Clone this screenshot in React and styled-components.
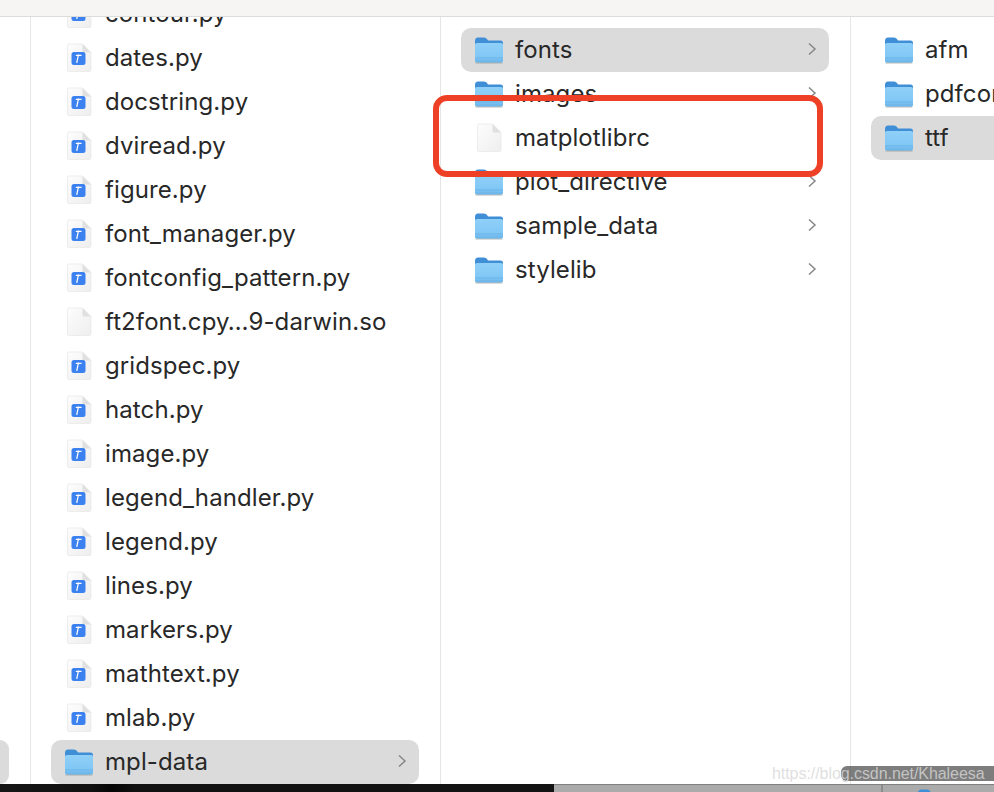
import React from 'react';
import styled, { createGlobalStyle } from 'styled-components';

const GlobalStyle = createGlobalStyle`
  html, body {
    margin: 0;
    padding: 0;
    height: 100%;
    overflow: hidden;
    background: #fff;
  }
  * { box-sizing: border-box; }
`;

const moduleFiles = [
  { name: 'contour.py', type: 'py' },
  { name: 'dates.py', type: 'py' },
  { name: 'docstring.py', type: 'py' },
  { name: 'dviread.py', type: 'py' },
  { name: 'figure.py', type: 'py' },
  { name: 'font_manager.py', type: 'py' },
  { name: 'fontconfig_pattern.py', type: 'py' },
  { name: 'ft2font.cpy…9-darwin.so', type: 'file' },
  { name: 'gridspec.py', type: 'py' },
  { name: 'hatch.py', type: 'py' },
  { name: 'image.py', type: 'py' },
  { name: 'legend_handler.py', type: 'py' },
  { name: 'legend.py', type: 'py' },
  { name: 'lines.py', type: 'py' },
  { name: 'markers.py', type: 'py' },
  { name: 'mathtext.py', type: 'py' },
  { name: 'mlab.py', type: 'py' },
  { name: 'mpl-data', type: 'folder', selected: true },
];

const dataFiles = [
  { name: 'fonts', type: 'folder', selected: true },
  { name: 'images', type: 'folder' },
  { name: 'matplotlibrc', type: 'file' },
  { name: 'plot_directive', type: 'folder' },
  { name: 'sample_data', type: 'folder' },
  { name: 'stylelib', type: 'folder' },
];

const fontFiles = [
  { name: 'afm', type: 'folder' },
  { name: 'pdfcorefonts', type: 'folder' },
  { name: 'ttf', type: 'folder', selected: true },
];

const FolderIcon = ({ idSuffix }) => (
  <svg width="30" height="28" viewBox="0 0 30 28">
    <defs>
      <linearGradient id={`folderBody${idSuffix}`} x1="0" y1="0" x2="0" y2="1">
        <stop offset="0" stopColor="#8fd0f8" />
        <stop offset="1" stopColor="#7cc4f4" />
      </linearGradient>
    </defs>
    <path d="M1 5 Q1 1.5 4 1.5 H10 Q12 1.5 13 3 L14 4.5 H26.5 Q29 4.5 29 7 V12 H1 Z" fill="#3f8ed6" />
    <path d="M1 8.5 Q1 7 3 7 H27 Q29 7 29 8.5 V24.5 Q29 26.5 27 26.5 H3 Q1 26.5 1 24.5 Z" fill={`url(#folderBody${idSuffix})`} />
    <rect x="1" y="21.5" width="28" height="1" fill="#68b2e8" />
    <path d="M1 23.5 H29 V24.6 Q29 26.5 27 26.5 H3 Q1 26.5 1 24.6 Z" fill="#6fb9ed" />
    <path d="M1.5 27 H28.5" stroke="#8d8d8d" strokeWidth="1" opacity="0.6" />
  </svg>
);

const DocIcon = ({ python, idSuffix }) => (
  <svg width="26" height="30" viewBox="0 0 26 30">
    <defs>
      <linearGradient id={`docBody${idSuffix}`} x1="0" y1="0" x2="1" y2="1">
        <stop offset="0" stopColor="#fdfdfd" />
        <stop offset="1" stopColor="#eeeeee" />
      </linearGradient>
    </defs>
    <path d="M1.5 2.5 Q1.5 1 3 1 H16.5 L25 9.5 V27 Q25 28.5 23.5 28.5 H3 Q1.5 28.5 1.5 27 Z" fill={`url(#docBody${idSuffix})`} stroke="#e6e6e6" strokeWidth="0.7" />
    <path d="M16.5 1 V8 Q16.5 9.5 18 9.5 H25 Z" fill="#e0e0e0" />
    {python && <rect x="5.5" y="9" width="14" height="13" rx="2.5" fill="#3b82f0" />}
    {python && <path d="M12.4 12 L10.8 19.5" stroke="#fff" strokeWidth="1.2" strokeLinecap="round" />}
    {python && <path d="M10.4 12.4 H15" stroke="#fff" strokeWidth="1.4" strokeLinecap="round" />}
  </svg>
);

const Chevron = () => (
  <ChevronMark width="10" height="14" viewBox="0 0 10 14">
    <path d="M2 1.5 L8 7 L2 12.5" fill="none" stroke="#878787" strokeWidth="1.5" />
  </ChevronMark>
);

const FileRow = ({ item, chevrons, idSuffix }) => (
  <Row $selected={item.selected}>
    <IconSlot>
      {item.type === 'folder' ? (
        <FolderIcon idSuffix={idSuffix} />
      ) : (
        <DocIcon python={item.type === 'py'} idSuffix={idSuffix} />
      )}
    </IconSlot>
    <RowName>{item.name}</RowName>
    {chevrons && item.type === 'folder' && <Chevron />}
  </Row>
);

const App = () => (
  <Page>
    <GlobalStyle />
    <TopBar />
    <Columns>
      <ParentStub>
        <StubRow />
      </ParentStub>
      <ModuleColumn>
        {moduleFiles.map((item, i) => (
          <FileRow key={item.name} item={item} chevrons idSuffix={`m${i}`} />
        ))}
      </ModuleColumn>
      <ListColumn>
        {dataFiles.map((item, i) => (
          <FileRow key={item.name} item={item} chevrons idSuffix={`d${i}`} />
        ))}
      </ListColumn>
      <ListColumn>
        {fontFiles.map((item, i) => (
          <FileRow key={item.name} item={item} idSuffix={`f${i}`} />
        ))}
      </ListColumn>
    </Columns>
    <BottomStrip>
      <DesktopDark />
      <DesktopWindow>
        <DesktopDivider />
        <DesktopFolder>
          <FolderIcon idSuffix="bottom" />
        </DesktopFolder>
      </DesktopWindow>
    </BottomStrip>
    <Highlight />
    <WatermarkBack />
    <Watermark>https://blog.csdn.net/Khaleesa</Watermark>
  </Page>
);

const Page = styled.div`
  position: relative;
  width: 994px;
  height: 792px;
  overflow: hidden;
  display: flex;
  flex-direction: column;
  background: #fff;
  font-family: Inter, "Liberation Sans", sans-serif;
`;

const TopBar = styled.div`
  height: 17px;
  flex-shrink: 0;
  background: #f6f5f3;
  border-bottom: 1px solid #dcdcdb;
`;

const Columns = styled.div`
  display: flex;
  height: 767px;
  flex-shrink: 0;
`;

const Column = styled.div`
  display: flex;
  flex-direction: column;
  flex-shrink: 0;
  overflow: hidden;
  border-right: 1.5px solid #e6e6e6;
`;

const ParentStub = styled(Column)`
  width: 31px;
  justify-content: flex-end;
`;

const StubRow = styled.div`
  width: 9px;
  height: 44px;
  background: #dbdbdb;
  border-radius: 0 10px 10px 0;
`;

const ModuleColumn = styled(Column)`
  width: 410px;
  padding: 0 21px 0 20px;
  justify-content: flex-end;
`;

const ListColumn = styled(Column)`
  width: 410px;
  padding: 11px 21px 0 20px;
`;

const Row = styled.div`
  display: flex;
  align-items: center;
  flex-shrink: 0;
  height: 44px;
  padding: 0 12px 0 13px;
  border-radius: 10px;
  background: ${(p) => (p.$selected ? '#dbdbdb' : 'transparent')};
`;

const IconSlot = styled.div`
  display: flex;
  align-items: center;
  justify-content: center;
  width: 30px;
  height: 30px;
  margin-right: 11px;
  flex-shrink: 0;
`;

const RowName = styled.span`
  flex: 1;
  font-size: 24px;
  line-height: 30px;
  letter-spacing: 0.1px;
  color: #282828;
  white-space: nowrap;
`;

const ChevronMark = styled.svg`
  flex-shrink: 0;
  margin-top: -3px;
`;

const BottomStrip = styled.div`
  display: flex;
  height: 8px;
  flex-shrink: 0;
`;

const DesktopDark = styled.div`
  width: 554px;
  background: linear-gradient(90deg, #151515 0, #111 90px, #050505 112px, #111 135px, #131313 100%);
`;

const DesktopWindow = styled.div`
  flex: 1;
  display: flex;
  padding-left: 327px;
  background: #ababab;
  border-top: 1px solid #808080;
`;

const DesktopDivider = styled.div`
  width: 1.5px;
  background: #8c8c8c;
`;

const DesktopFolder = styled.div`
  margin: 3px 0 0 34px;
  height: 4px;
  overflow: hidden;
`;

const Highlight = styled.div`
  position: absolute;
  left: 433px;
  top: 95px;
  width: 390px;
  height: 82px;
  border: 6px solid #ee4027;
  border-radius: 14px;
`;

const WatermarkBack = styled.div`
  position: absolute;
  left: 841px;
  top: 766px;
  width: 153px;
  height: 15px;
  background: rgba(70, 70, 70, 0.7);
  border-radius: 6px 0 0 6px;
`;

const Watermark = styled.div`
  position: absolute;
  left: 772px;
  top: 764px;
  font-family: "Liberation Sans", Arial, sans-serif;
  font-size: 16px;
  line-height: 20px;
  letter-spacing: -0.06px;
  color: rgba(215, 215, 215, 0.8);
  white-space: nowrap;
`;

export default App;
